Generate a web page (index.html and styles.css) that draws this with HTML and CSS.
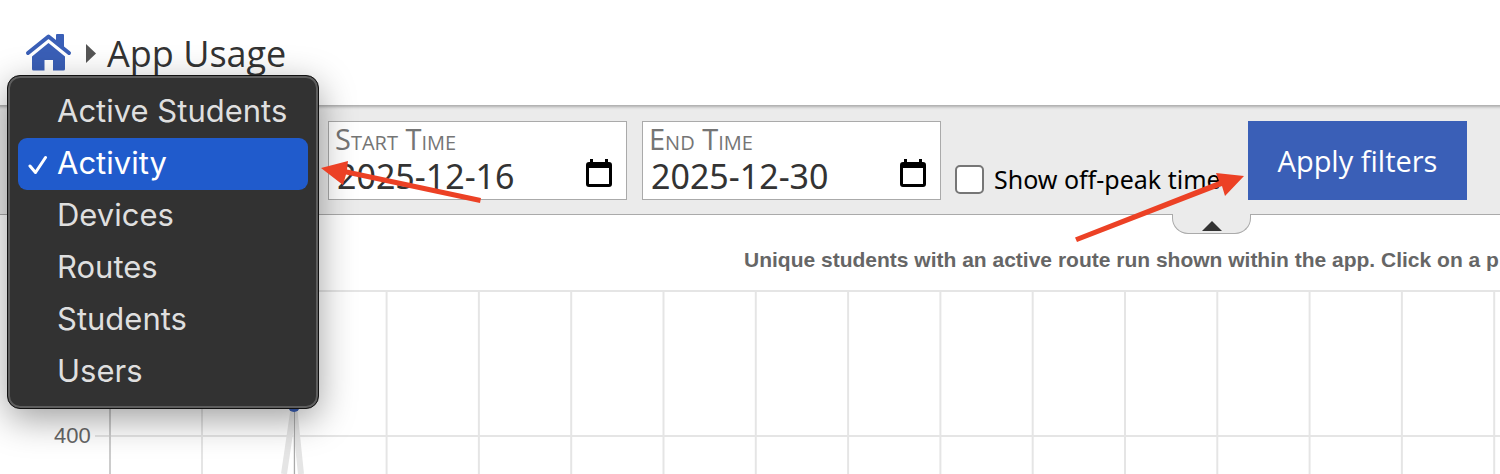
FILE: index.html
```
<!DOCTYPE html>
<html lang="en">

<head>
  <meta charset="UTF-8">
  <meta name="viewport" content="width=device-width, initial-scale=1.0">
  <title>App Usage</title>
  <link rel="stylesheet" href="styles.css">
</head>

<body>
  <header class="header">
    <a class="home" href="#" aria-label="Home">
      <svg width="46" height="37" viewBox="0 0 46 37">
        <path d="M31 1q0-1 1-1h6q1 0 1 1v15l-8-7z" />
        <path d="M23.500 9L40 22.500V35q0 1.500-1.500 1.500H28V26h-8.500v10.500h-11Q7 36.500 7 35V22.500z" />
        <path class="roof" d="M3 19L23.500 2.500L44 19" />
      </svg>
    </a>
    <svg class="crumb" width="10" height="19" viewBox="0 0 10 19">
      <path d="M0 0l10 9.500L0 19z" />
    </svg>
    <h1>App Usage</h1>
  </header>

  <form class="filters" onsubmit="return false">
    <div class="report">
      <div class="menu">
        <select id="report" size="6" aria-label="Report">
          <option>Active Students</option>
          <option selected>Activity</option>
          <option>Devices</option>
          <option>Routes</option>
          <option>Students</option>
          <option>Users</option>
        </select>
        <svg class="check" width="20" height="20" viewBox="0 0 20 20">
          <path d="M2 11l5.500 6.500L17.500 2.500" />
        </svg>
      </div>
    </div>

    <div class="field">
      <label for="start">Start Time</label>
      <div class="date">
        <input type="text" id="start" value="2025-12-16">
        <button type="button" aria-label="Pick start date">
          <svg width="26" height="28" viewBox="0 0 26 28">
            <path fill-rule="evenodd" d="M4 0h3v3h12V0h3v3h1q3 0 3 3v19q0 3-3 3H3q-3 0-3-3V6q0-3 3-3h1zM3 9v16h20V9z" />
          </svg>
        </button>
      </div>
    </div>

    <div class="field">
      <label for="end">End Time</label>
      <div class="date">
        <input type="text" id="end" value="2025-12-30">
        <button type="button" aria-label="Pick end date">
          <svg width="26" height="28" viewBox="0 0 26 28">
            <path fill-rule="evenodd" d="M4 0h3v3h12V0h3v3h1q3 0 3 3v19q0 3-3 3H3q-3 0-3-3V6q0-3 3-3h1zM3 9v16h20V9z" />
          </svg>
        </button>
      </div>
    </div>

    <div class="offpeak">
      <input type="checkbox" id="offpeak">
      <label for="offpeak">Show off-peak time</label>
    </div>

    <button class="apply" type="submit">Apply filters</button>

    <button class="collapse" type="button" aria-label="Hide filters">
      <svg width="20" height="10" viewBox="0 0 20 10">
        <path d="M0 10L10 0l10 10z" />
      </svg>
    </button>
  </form>

  <main class="chart">
    <h2>Unique students with an active route run shown within the app. Click on a p</h2>
    <svg class="plot" height="199" aria-label="Activity chart">
      <defs>
        <pattern id="columns" x="201" y="0" width="92.300" height="199" patternUnits="userSpaceOnUse">
          <rect width="2" height="199" />
        </pattern>
      </defs>
      <path class="line" d="M284 199L294 131L301 199" />
      <rect x="110" y="15" width="100%" height="2" class="grid" />
      <rect x="95" y="160" width="100%" height="2" class="grid" />
      <rect x="111" y="17" width="100%" height="182" fill="url(#columns)" />
      <rect x="109" y="15" width="2" height="184" class="axis" />
      <rect x="294" y="131" width="1" height="68" class="marker" />
      <circle cx="294" cy="131" r="6" />
      <text x="54" y="168">400</text>
    </svg>
  </main>

  <!-- Help arrows -->
  <svg class="arrow arrow-report" width="160" height="46" viewBox="0 0 160 46">
    <path d="M0 12L27 5l-1 8.500L160 42l-1 5L25 18.500L22 29z" />
  </svg>
  <svg class="arrow arrow-apply" width="170" height="76" viewBox="0 0 170 76">
    <path d="M0 69.500L144 13L141 5l28 3l-19 20l-3-10L2 74z" />
  </svg>
</body>

</html>
```
FILE: styles.css
```
* {
  box-sizing: border-box;
}

body {
  margin: 0;
  position: relative;
  background: #fff;
  font-family: "Open Sans", sans-serif;
  overflow-x: hidden;
}

button,
input,
select {
  font-family: inherit;
  margin: 0;
}

.header {
  display: flex;
  align-items: center;
  height: 105px;
  padding: 0 25px;
}

.home {
  display: block;
  height: 37px;
  fill: #3a5fb7;
}

.home svg {
  overflow: visible;
}

.roof {
  fill: none;
  stroke: #3a5fb7;
  stroke-width: 4;
  stroke-linecap: round;
  stroke-linejoin: round;
}

.crumb {
  margin: 2px 11px 0 15px;
  fill: #555;
}

h1 {
  margin: 2px 0 0;
  color: #333;
  font-size: 36px;
  font-weight: 400;
  line-height: 48px;
}

/* Filter bar */
.filters {
  position: relative;
  display: flex;
  gap: 15px;
  height: 110px;
  padding: 16px 33px 14px 8px;
  background: #ebebeb;
  border-bottom: 1px solid #aaa;
  box-shadow: inset 0 5px 3px -3px #aaa;
}

.report {
  position: relative;
  flex: 0 0 305px;
}

.menu {
  position: absolute;
  z-index: 2;
  top: -46px;
  left: -1px;
  width: 312px;
  padding: 10px;
  border: 1px solid #111;
  border-radius: 13px;
  background: #323232;
  box-shadow: inset 0 0 0 2px #5e5e5e, 0 10px 36px rgba(0, 0, 0, .38);
}

.menu select {
  display: block;
  width: 100%;
  height: 312px;
  padding: 0;
  border: 0;
  outline: 0;
  background: transparent;
  font-family: Inter, sans-serif;
  font-size: 31px;
  overflow: hidden;
}

.menu option {
  height: 52px;
  padding: 6px 0 0 39px;
  border-radius: 9px;
  color: #dfdfdf;
}

.menu option:checked {
  background: linear-gradient(#205bcc, #205bcc);
  -webkit-text-fill-color: #fff;
}

.check {
  position: absolute;
  top: 79px;
  left: 20px;
  fill: none;
  stroke: #fff;
  stroke-width: 3;
  stroke-linecap: round;
  stroke-linejoin: round;
}

.field {
  flex: 0 0 299px;
  height: 79px;
  padding: 0 14px 0 6px;
  background: #fff;
  border: 1px solid #aaa;
}

.field label {
  display: block;
  color: #757575;
  font-size: 29px;
  font-variant: small-caps;
  line-height: 34px;
}

.date {
  display: flex;
  align-items: center;
  justify-content: space-between;
  height: 40px;
}

.date input {
  width: 200px;
  padding: 0 2px;
  border: 0;
  background: transparent;
  color: #333;
  font-family: "Noto Sans", sans-serif;
  font-size: 34px;
  line-height: 40px;
}

.date button {
  height: 28px;
  margin-bottom: 6px;
  padding: 0;
  border: 0;
  background: none;
}

.date svg {
  display: block;
}

.offpeak {
  display: flex;
  align-items: center;
  gap: 10px;
  height: 34px;
  margin: 41px 0 0 -1px;
  font-family: "Noto Sans", sans-serif;
  font-size: 25px;
  white-space: nowrap;
}

.offpeak input {
  appearance: none;
  width: 29px;
  height: 29px;
  border: 2px solid #767676;
  border-radius: 5px;
  background: #fff;
}

.apply {
  width: 219px;
  height: 79px;
  margin-left: auto;
  padding: 0;
  border: 0;
  background: #3a5fb7;
  color: #fff;
  font-size: 29px;
}

.collapse {
  position: absolute;
  right: 249px;
  bottom: -20px;
  width: 79px;
  height: 20px;
  padding: 0;
  border: 1px solid #aaa;
  border-top: 0;
  border-radius: 0 0 16px 16px;
  background: #ebebeb;
  fill: #333;
}

.collapse svg {
  display: block;
  margin: 4px auto 0;
}

/* Chart */
.chart {
  overflow: hidden;
}

h2 {
  margin: 0 0 0 744px;
  padding-top: 30px;
  color: #666;
  font-family: "Liberation Sans", sans-serif;
  font-size: 21px;
  line-height: 30px;
  white-space: nowrap;
}

.plot {
  display: block;
  width: 100%;
}

.plot text {
  fill: #666;
  font-family: "Liberation Sans", sans-serif;
  font-size: 22px;
}

.plot circle {
  fill: #3a5fb7;
}

.grid,
#columns rect {
  fill: #e5e5e5;
}

.axis {
  fill: #ccc;
}

.marker {
  fill: #aaa;
}

.line {
  fill: none;
  stroke: #e5e5e5;
  stroke-width: 6;
}

.arrow {
  position: absolute;
  z-index: 3;
  overflow: visible;
  fill: #ec4125;
  pointer-events: none;
}

.arrow-report {
  top: 156px;
  left: 321px;
}

.arrow-apply {
  top: 168px;
  right: 255px;
}
```
